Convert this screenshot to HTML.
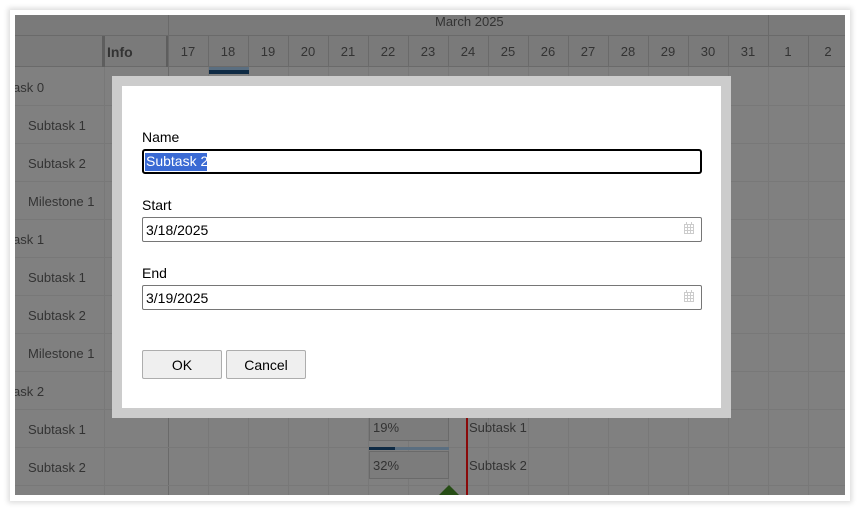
<!DOCTYPE html>
<html><head><style>
*{margin:0;padding:0;box-sizing:border-box}
body{width:860px;height:511px;background:#fff;font-family:"Segoe UI","Liberation Sans",sans-serif;font-size:13px;position:relative;overflow:hidden}
.frame{position:absolute;left:10px;top:10px;width:840px;height:491px;background:#fff;box-shadow:0 0 5px 2px #ddd}
.c{position:absolute;left:15px;top:15px;width:830px;height:480px;background:#808080;overflow:hidden}
.a{position:absolute}
.t{position:absolute;color:#333;white-space:nowrap}
.hl{position:absolute;background:#6a6a6a}
.gl{position:absolute;background:#787878}
</style></head><body>
<div class="frame"></div>
<div class="c">
<div class="a" style="left:0;top:0;width:830px;height:52px;background:#7a7a7a"></div>
<div class="hl" style="left:0;top:20px;width:830px;height:1px"></div>
<div class="hl" style="left:0;top:51px;width:830px;height:1px"></div>
<div class="hl" style="left:153px;top:0;width:1px;height:480px"></div>
<div class="hl" style="left:753px;top:0;width:1px;height:20px"></div>
<div class="hl" style="left:87px;top:21px;width:3px;height:31px;background:#5e5e5e"></div>
<div class="hl" style="left:151px;top:21px;width:2px;height:31px;background:#5e5e5e"></div>
<div class="t" style="left:420px;top:-1px;font-size:13px">March 2025</div>
<div class="t" style="left:92px;top:29px;font-weight:bold;font-size:14px">Info</div>
<div id="days"></div>
<div id="rows"></div>
<div class="a" style="left:194px;top:52px;width:40px;height:3px;background:#5a6e80"></div>
<div class="a" style="left:194px;top:55px;width:40px;height:4px;background:#0e2a44"></div>
<div class="a" style="left:354px;top:398px;width:80px;height:28px;border:1px solid #6a6a6a;background:#7c7c7c"></div>
<div class="t" style="left:358px;top:405px">19%</div>
<div class="a" style="left:354px;top:432px;width:80px;height:3px;background:#5a6e80"></div>
<div class="a" style="left:354px;top:432px;width:26px;height:3px;background:#0e2a44"></div>
<div class="a" style="left:354px;top:436px;width:80px;height:28px;border:1px solid #6a6a6a;background:#7c7c7c"></div>
<div class="t" style="left:358px;top:443px">32%</div>
<div class="a" style="left:451px;top:395px;width:2px;height:90px;background:#8a0a0a"></div>
<div class="t" style="left:454px;top:405px">Subtask 1</div>
<div class="t" style="left:454px;top:443px">Subtask 2</div>
<div class="a" style="left:424px;top:470px;width:0;height:0;border-left:10px solid transparent;border-right:10px solid transparent;border-bottom:10px solid #264d15"></div>
</div>
<div class="a" style="left:112px;top:76px;width:619px;height:342px;background:#ccc"></div>
<div class="a" style="left:122px;top:86px;width:599px;height:322px;background:#fff"></div>
<div class="t" style="left:142px;top:129px;color:#000;font-size:14px">Name</div>
<div class="a" style="left:142px;top:149px;width:560px;height:25px;border:2px solid #000;border-radius:3px"></div>
<div class="a" style="left:145px;top:153px;width:62px;height:18px;background:#3a6ad4"></div>
<div class="t" style="left:146px;top:153px;color:#fff;font-size:14px">Subtask 2</div>
<div class="t" style="left:142px;top:197px;color:#000;font-size:14px">Start</div>
<div class="a" style="left:142px;top:217px;width:560px;height:25px;border:1px solid #767676;border-radius:2px"></div>
<div class="t" style="left:146px;top:222px;color:#000;font-size:14px">3/18/2025</div>
<div class="t" style="left:142px;top:265px;color:#000;font-size:14px">End</div>
<div class="a" style="left:142px;top:285px;width:560px;height:25px;border:1px solid #767676;border-radius:2px"></div>
<div class="t" style="left:146px;top:290px;color:#000;font-size:14px">3/19/2025</div>
<svg class="a" style="left:684px;top:222px" width="10" height="12"><g fill="none" stroke="#ccc"><rect x="0.5" y="2.5" width="9" height="9"/><path d="M0 5.5h10M0 8.5h10M3.5 2v10M6.5 2v10M2.5 0v3M7.5 0v3"/></g></svg>
<svg class="a" style="left:684px;top:290px" width="10" height="12"><g fill="none" stroke="#ccc"><rect x="0.5" y="2.5" width="9" height="9"/><path d="M0 5.5h10M0 8.5h10M3.5 2v10M6.5 2v10M2.5 0v3M7.5 0v3"/></g></svg>
<div class="a" style="left:142px;top:350px;width:80px;height:29px;border:1px solid #adadad;background:#efefef;border-radius:2px;text-align:center;line-height:28px;font-size:14px">OK</div>
<div class="a" style="left:226px;top:350px;width:80px;height:29px;border:1px solid #adadad;background:#efefef;border-radius:2px;text-align:center;line-height:28px;font-size:14px">Cancel</div>
<script>
var d=document.getElementById('days'),h='';
var days=[17,18,19,20,21,22,23,24,25,26,27,28,29,30,31,1,2];
for(var i=0;i<days.length;i++){var x=153+i*40;
h+='<div class="t" style="left:'+x+'px;top:29px;width:40px;text-align:center;font-size:13px">'+days[i]+'</div>';
h+='<div class="hl" style="left:'+(x+40)+'px;top:21px;width:1px;height:31px"></div>';
h+='<div class="gl" style="left:'+(x+40)+'px;top:52px;width:1px;height:430px"></div>';}
d.innerHTML=h;
var names=[['ask 0',-2],['Subtask 1',13],['Subtask 2',13],['Milestone 1',13],['ask 1',-2],['Subtask 1',13],['Subtask 2',13],['Milestone 1',13],['ask 2',-2],['Subtask 1',13],['Subtask 2',13]];
var r=document.getElementById('rows');h='';
for(var j=0;j<names.length;j++){var y=52+j*38;
h+='<div class="t" style="left:'+names[j][1]+'px;top:'+(y+13)+'px">'+names[j][0]+'</div>';
h+='<div class="gl" style="left:0;top:'+(y+38)+'px;width:830px;height:1px"></div>';}
h+='<div class="gl" style="left:89px;top:52px;width:1px;height:430px"></div>';
r.innerHTML=h;
</script>
</body></html>
